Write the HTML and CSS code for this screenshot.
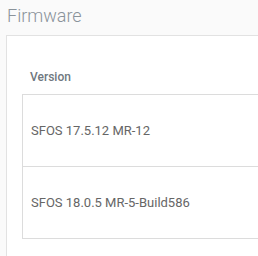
FILE: index.html
```html
<!DOCTYPE html>
<html lang="en">
<head>
    <meta charset="UTF-8">
    <meta name="viewport" content="width=device-width, initial-scale=1.0">
    <title>Firmware</title>
    <link rel="stylesheet" href="styles.css">
</head>
<body>
    <div class="page">
        <h1 class="title">Firmware</h1>
        <div class="card">
            <div class="col-head">Version</div>
            <div class="table">
                <div class="row">SFOS 17.5.12 MR-12</div>
                <div class="row">SFOS 18.0.5 MR-5-Build586</div>
            </div>
        </div>
    </div>
</body>
</html>
```

FILE: styles.css
```css
html, body {
    margin: 0;
    padding: 0;
    background-color: #fafafa;
    overflow: hidden;
}
body {
    font-family: Roboto, "Liberation Sans", sans-serif;
    width: 258px;
    height: 256px;
}
.page {
    padding: 4px 0 0 6px;
}
.title {
    margin: 0 0 0 1px;
    font-size: 18px;
    font-weight: 300;
    line-height: 24px;
    height: 31px;
    color: #8a939a;
}
.card {
    background-color: #fff;
    border: 1px solid #e2e2e2;
    border-right: none;
    border-bottom: none;
    padding-left: 15px;
    height: 220px;
}
.col-head {
    height: 58px;
    box-sizing: border-box;
    padding: 33px 0 0 8px;
    font-size: 12px;
    font-weight: 500;
    line-height: 16px;
    color: #6f7880;
}
.table {
    border: 1px solid #dcdcdc;
    border-right: none;
}
.row {
    height: 71px;
    display: flex;
    align-items: center;
    padding-left: 8px;
    font-size: 13px;
    color: #666;
}
.row + .row {
    border-top: 1px solid #dcdcdc;
}
```
